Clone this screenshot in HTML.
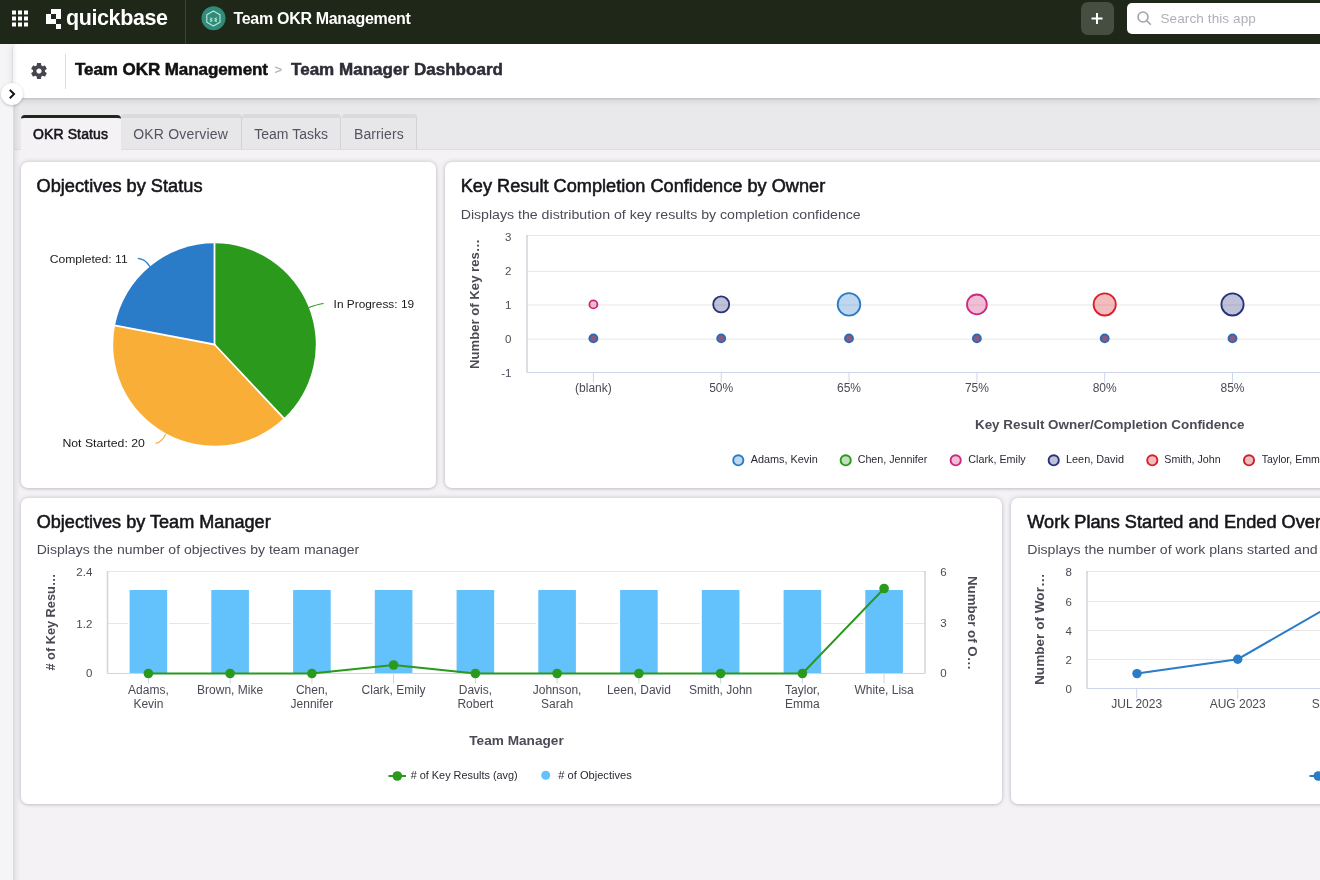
<!DOCTYPE html>
<html lang="en">
<head>
<meta charset="utf-8">
<title>Team Manager Dashboard</title>
<style>
*{box-sizing:border-box;margin:0;padding:0}
html,body{width:1320px;height:880px;overflow:hidden}
body{position:relative;background:#f4f2f5;font-family:"Liberation Sans",sans-serif;color:#1a1a1a}
.abs{position:absolute}
#topbar{left:0;top:0;width:1320px;height:44px;background:#1e2718}
#topbar .sep{left:185px;top:0;width:1px;height:44px;background:#3b4336}
#qb{left:66px;top:3.600px;font-size:21.5px;font-weight:700;color:#fff;letter-spacing:-0.4px;line-height:28px;white-space:nowrap}
#appname{left:233.500px;top:9.100px;font-size:16px;font-weight:700;color:#fff;line-height:20px;white-space:nowrap;letter-spacing:-0.31px}
#plus{left:1081px;top:2px;width:33px;height:33px;border-radius:7px;background:#454e40}
#search{left:1127px;top:3px;width:200px;height:31px;border-radius:5px;background:#fff}
#search span{position:absolute;left:33.400px;top:8px;font-size:13.5px;color:#b1b0b9;line-height:16px;white-space:nowrap;letter-spacing:0.12px}
#leftstrip{left:0;top:44px;width:13px;height:836px;background:#f5f4f7}
#leftedge{left:13px;top:98px;width:7px;height:782px;background:linear-gradient(to right,rgba(40,30,60,.13),rgba(40,30,60,.05) 40%,rgba(40,30,60,0))}
#pagebar{left:13px;top:44px;width:1307px;height:54px;background:#fff;box-shadow:0 1px 2px rgba(0,0,0,.10),0 2px 7px rgba(0,0,0,.13);background:linear-gradient(to right,#f1f0f3,#fff 4px)}
#vdiv{left:65.300px;top:54px;width:1px;height:35px;background:#dddce0}
#bc1{left:75px;top:58.600px;font-size:17px;font-weight:700;color:#111;line-height:22px;white-space:nowrap;letter-spacing:-0.07px;-webkit-text-stroke:0.5px #111}
#bcsep{left:274.500px;top:58.500px;font-size:13px;font-weight:700;color:#b9b8c0;line-height:22px}
#bc2{left:291px;top:58.600px;font-size:17px;font-weight:700;color:#2e2d36;line-height:22px;white-space:nowrap;letter-spacing:0.03px;-webkit-text-stroke:0.5px #2e2d36}
#toggle{left:1px;top:83px;width:22px;height:22px;border-radius:50%;background:#fff;box-shadow:0 1px 3px rgba(0,0,0,.22)}
#tabband{left:14px;top:98px;width:1306px;height:52px;background:#e9e9eb;border-bottom:1px solid #dedde1}
.tab{top:114px;height:35px;font-size:14px;line-height:18px;padding-top:7px;text-align:center;white-space:nowrap;color:#55535f;background:#e7e7e9;border-top:4px solid #dad9dd;border-right:1px solid #d2d1d6;border-radius:4px 4px 0 0}
.tab.on{top:115px;height:35px;background:#f4f2f5;border-top:3px solid #1e2718;color:#16151a;-webkit-text-stroke:0.55px #16151a;letter-spacing:0.13px;border-right:none}
.card{background:#fff;border-radius:7px;box-shadow:0 0 5px rgba(20,15,40,.20),0 1px 3px rgba(20,15,40,.10)}
svg text{font-family:"Liberation Sans",sans-serif}
</style>
</head>
<body>
<div id="root" class="abs" style="left:0;top:0;width:1320px;height:880px;overflow:hidden;will-change:transform">
<div id="topbar" class="abs">
  <svg class="abs" style="left:12px;top:10px" width="17" height="17" viewBox="0 0 17 17"><g fill="#fff"><rect x="0" y="0.5" width="4" height="4"/><rect x="6" y="0.5" width="4" height="4"/><rect x="12" y="0.5" width="4" height="4"/><rect x="0" y="6.5" width="4" height="4"/><rect x="6" y="6.5" width="4" height="4"/><rect x="12" y="6.5" width="4" height="4"/><rect x="0" y="12.5" width="4" height="4"/><rect x="6" y="12.5" width="4" height="4"/><rect x="12" y="12.5" width="4" height="4"/></g></svg>
  <svg class="abs" style="left:46px;top:9px" width="16" height="20" viewBox="0 0 16 20"><path fill="#fff" fill-rule="evenodd" d="M5 0h10v10H5z M0 5h10v10H0z M10 15h5v5h-5z"/></svg>
  <div id="qb" class="abs">quickbase</div>
  <div class="abs sep"></div>
  <svg class="abs" style="left:201px;top:6px" width="25" height="25" viewBox="0 0 25 25"><circle cx="12.500" cy="12.300" r="12" fill="#2e8c79"/><path d="M12.400 4.900l6.600 3.800v7.600l-6.600 3.800-6.600-3.800V8.700z" fill="none" stroke="#d3ece5" stroke-width="1.100" stroke-linejoin="round" opacity=".92"/><path d="M8.900 11.800l2.400 1-2.400 1 2.400 1-2.400 1M16 11.800l-2.400 1 2.400 1-2.400 1 2.400 1" fill="none" stroke="#d3ece5" stroke-width="0.900" opacity=".9"/></svg>
  <div id="appname" class="abs">Team OKR Management</div>
  <div id="plus" class="abs"><svg width="32" height="33" viewBox="0 0 32 33"><path d="M16 11v11M10.500 16.500h11" stroke="#fff" stroke-width="2"/></svg></div>
  <div id="search" class="abs"><svg class="abs" style="left:9px;top:7px" width="17" height="17" viewBox="0 0 17 17"><circle cx="7" cy="7" r="5" fill="none" stroke="#a3a2ab" stroke-width="1.600"/><path d="M10.800 10.800l4 4" stroke="#a3a2ab" stroke-width="1.600"/></svg><span>Search this app</span></div>
</div>
<div id="leftstrip" class="abs"></div>
<div id="tabband" class="abs"></div>
<div id="leftedge" class="abs"></div>
<div id="pagebar" class="abs"></div>
<svg class="abs" style="left:28.700px;top:60.800px" width="20" height="20" viewBox="0 0 24 24"><path fill="#47454f" d="M19.140 12.940c.04-.3.060-.61.060-.94 0-.32-.02-.64-.07-.94l2.030-1.580a.49.490 0 0 0 .12-.61l-1.920-3.320a.488.488 0 0 0-.59-.22l-2.390.96c-.5-.38-1.030-.7-1.620-.94l-.36-2.540a.484.484 0 0 0-.48-.41h-3.840c-.24 0-.43.170-.47.410l-.36 2.540c-.59.240-1.130.57-1.620.94l-2.390-.96c-.22-.08-.47 0-.59.220L2.740 8.870c-.12.210-.08.470.12.610l2.030 1.580c-.05.300-.09.630-.09.940s.02.640.07.940l-2.030 1.580a.49.490 0 0 0-.12.610l1.920 3.320c.12.220.37.290.59.220l2.390-.96c.5.380 1.030.7 1.620.94l.36 2.540c.05.240.24.410.48.410h3.840c.24 0 .44-.17.470-.41l.36-2.540c.59-.24 1.130-.56 1.620-.94l2.390.96c.22.080.47 0 .59-.22l1.920-3.320c.12-.22.070-.47-.12-.61l-2.010-1.580zM12 15.100c-1.700 0-3.100-1.400-3.100-3.100s1.400-3.100 3.100-3.100 3.100 1.400 3.100 3.100-1.400 3.100-3.100 3.100z"/></svg>
<div id="vdiv" class="abs"></div>
<div id="bc1" class="abs">Team OKR Management</div>
<div id="bcsep" class="abs">&gt;</div>
<div id="bc2" class="abs">Team Manager Dashboard</div>
<div id="toggle" class="abs"><svg width="22" height="22" viewBox="0 0 22 22"><path d="M8.800 6.900l4.200 4.200-4.200 4.200" fill="none" stroke="#111" stroke-width="2"/></svg></div>

<div class="abs tab on" style="left:20.500px;width:100px"><span>OKR Status</span></div>
<div class="abs tab" style="left:120.500px;width:121.300px;letter-spacing:0.2px"><span>OKR Overview</span></div>
<div class="abs tab" style="left:241.800px;width:99.700px"><span>Team Tasks</span></div>
<div class="abs tab" style="left:341.500px;width:75.800px;letter-spacing:0.1px"><span>Barriers</span></div>

<div class="abs card" id="c1" style="left:21px;top:162px;width:415px;height:326px"></div>
<div class="abs card" id="c2" style="left:445px;top:162px;width:900px;height:326px"></div>
<div class="abs card" id="c3" style="left:21px;top:498px;width:981px;height:306px"></div>
<div class="abs card" id="c4" style="left:1011px;top:498px;width:340px;height:306px"></div>

<svg id="charts" class="abs" style="left:0;top:0" width="1320" height="880" viewBox="0 0 1320 880">
<text x="36.5" y="192" font-size="18" fill="#16151a" text-anchor="start" font-weight="normal" textLength="166" lengthAdjust="spacingAndGlyphs" stroke="#16151a" stroke-width="0.55">Objectives by Status</text>
<path d="M214.5 344.5L214.50 243.20A101.3 101.3 0 0 1 283.84 418.34Z" fill="#2a991c"/>
<path d="M214.5 344.5L283.84 418.34A101.3 101.3 0 0 1 114.99 325.52Z" fill="#f9ae38"/>
<path d="M214.5 344.5L114.99 325.52A101.3 101.3 0 0 1 214.50 243.20Z" fill="#2a7cc8"/>
<path d="M214.5 344.5L214.50 242.70" stroke="#fff" stroke-width="1.8" stroke-linecap="round"/>
<path d="M214.5 344.5L284.19 418.71" stroke="#fff" stroke-width="1.8" stroke-linecap="round"/>
<path d="M214.5 344.5L114.50 325.42" stroke="#fff" stroke-width="1.8" stroke-linecap="round"/>
<path d="M137.8 258.4C143.5 258.6 146.5 262 150 266.6" fill="none" stroke="#2a7cc8" stroke-width="1.2"/>
<path d="M308.8 307.5C314 305.6 318 304.2 323.6 303.5" fill="none" stroke="#2a991c" stroke-width="1.2"/>
<path d="M165.7 434.2C163 439.6 160.5 442.8 155.5 443.4" fill="none" stroke="#f9ae38" stroke-width="1.2"/>
<text x="49.7" y="262.5" font-size="11.5" fill="#1a1a1a" text-anchor="start" font-weight="normal" textLength="78" lengthAdjust="spacingAndGlyphs">Completed: 11</text>
<text x="333.6" y="307.9" font-size="11.5" fill="#1a1a1a" text-anchor="start" font-weight="normal" textLength="80.5" lengthAdjust="spacingAndGlyphs">In Progress: 19</text>
<text x="62.4" y="446.9" font-size="11.5" fill="#1a1a1a" text-anchor="start" font-weight="normal" textLength="82.5" lengthAdjust="spacingAndGlyphs">Not Started: 20</text>
<text x="460.7" y="192" font-size="18" fill="#16151a" text-anchor="start" font-weight="normal" textLength="364.5" lengthAdjust="spacingAndGlyphs" stroke="#16151a" stroke-width="0.55">Key Result Completion Confidence by Owner</text>
<text x="460.7" y="218.5" font-size="13" fill="#4b4a55" text-anchor="start" font-weight="normal" textLength="400" lengthAdjust="spacingAndGlyphs">Displays the distribution of key results by completion confidence</text>
<path d="M527 235.5H1320" stroke="#e6e6e6" stroke-width="1"/>
<path d="M527 271.4H1320" stroke="#e6e6e6" stroke-width="1"/>
<path d="M527 305.0H1320" stroke="#e6e6e6" stroke-width="1"/>
<path d="M527 339.2H1320" stroke="#e6e6e6" stroke-width="1"/>
<path d="M527 235.0V372.5" stroke="#d6d5dd" stroke-width="1.6"/>
<path d="M527 372.5H1320" stroke="#ccd6eb" stroke-width="1"/>
<text x="511.5" y="240.5" font-size="11.5" fill="#4b4a55" text-anchor="end" font-weight="normal">3</text>
<text x="511.5" y="275" font-size="11.5" fill="#4b4a55" text-anchor="end" font-weight="normal">2</text>
<text x="511.5" y="309" font-size="11.5" fill="#4b4a55" text-anchor="end" font-weight="normal">1</text>
<text x="511.5" y="342.5" font-size="11.5" fill="#4b4a55" text-anchor="end" font-weight="normal">0</text>
<text x="511.5" y="377.4" font-size="11.5" fill="#4b4a55" text-anchor="end" font-weight="normal">-1</text>
<text transform="translate(479,304) rotate(-90)" font-size="13" font-weight="700" fill="#4b4a55" text-anchor="middle" textLength="130" lengthAdjust="spacingAndGlyphs">Number of Key res…</text>
<path d="M593.4 372.5v10" stroke="#ccd6eb" stroke-width="1"/>
<text x="593.4" y="392" font-size="12" fill="#4b4a55" text-anchor="middle" font-weight="normal">(blank)</text>
<circle cx="593.4" cy="338.4" r="4.9" fill="#2b6bb3"/><circle cx="593.4" cy="338.4" r="2.9" fill="#8a5a80"/>
<path d="M721.2 372.5v10" stroke="#ccd6eb" stroke-width="1"/>
<text x="721.2" y="392" font-size="12" fill="#4b4a55" text-anchor="middle" font-weight="normal">50%</text>
<circle cx="721.2" cy="338.4" r="4.9" fill="#2b6bb3"/><circle cx="721.2" cy="338.4" r="2.9" fill="#8a5a80"/>
<path d="M849.0 372.5v10" stroke="#ccd6eb" stroke-width="1"/>
<text x="849.0" y="392" font-size="12" fill="#4b4a55" text-anchor="middle" font-weight="normal">65%</text>
<circle cx="849.0" cy="338.4" r="4.9" fill="#2b6bb3"/><circle cx="849.0" cy="338.4" r="2.9" fill="#8a5a80"/>
<path d="M976.9 372.5v10" stroke="#ccd6eb" stroke-width="1"/>
<text x="976.9" y="392" font-size="12" fill="#4b4a55" text-anchor="middle" font-weight="normal">75%</text>
<circle cx="976.9" cy="338.4" r="4.9" fill="#2b6bb3"/><circle cx="976.9" cy="338.4" r="2.9" fill="#8a5a80"/>
<path d="M1104.7 372.5v10" stroke="#ccd6eb" stroke-width="1"/>
<text x="1104.7" y="392" font-size="12" fill="#4b4a55" text-anchor="middle" font-weight="normal">80%</text>
<circle cx="1104.7" cy="338.4" r="4.9" fill="#2b6bb3"/><circle cx="1104.7" cy="338.4" r="2.9" fill="#8a5a80"/>
<path d="M1232.5 372.5v10" stroke="#ccd6eb" stroke-width="1"/>
<text x="1232.5" y="392" font-size="12" fill="#4b4a55" text-anchor="middle" font-weight="normal">85%</text>
<circle cx="1232.5" cy="338.4" r="4.9" fill="#2b6bb3"/><circle cx="1232.5" cy="338.4" r="2.9" fill="#8a5a80"/>
<circle cx="593.4" cy="304.4" r="4.00" fill="#cc2a72" fill-opacity="0.3" stroke="#cc2a72" stroke-width="1.8"/>
<circle cx="721.2" cy="304.4" r="8.00" fill="#27327a" fill-opacity="0.3" stroke="#27327a" stroke-width="1.8"/>
<circle cx="849.0" cy="304.4" r="11.30" fill="#2a7cc8" fill-opacity="0.3" stroke="#2a7cc8" stroke-width="1.8"/>
<circle cx="976.9" cy="304.4" r="9.90" fill="#cc2a7a" fill-opacity="0.3" stroke="#cc2a7a" stroke-width="1.8"/>
<circle cx="1104.7" cy="304.4" r="11.10" fill="#d6232b" fill-opacity="0.3" stroke="#d6232b" stroke-width="1.8"/>
<circle cx="1232.5" cy="304.4" r="11.10" fill="#27327a" fill-opacity="0.3" stroke="#27327a" stroke-width="1.8"/>
<text x="1109.7" y="429" font-size="13" fill="#4b4a55" text-anchor="middle" font-weight="700" textLength="269.5" lengthAdjust="spacingAndGlyphs">Key Result Owner/Completion Confidence</text>
<circle cx="738.3" cy="460.3" r="5.1" fill="#2a7cc8" fill-opacity="0.3" stroke="#2a7cc8" stroke-width="1.9"/>
<text x="750.7" y="463.3" font-size="10.5" fill="#2a2933" text-anchor="start" font-weight="normal" textLength="67" lengthAdjust="spacingAndGlyphs">Adams, Kevin</text>
<circle cx="845.7" cy="460.3" r="5.1" fill="#2a991c" fill-opacity="0.3" stroke="#2a991c" stroke-width="1.9"/>
<text x="857.7" y="463.3" font-size="10.5" fill="#2a2933" text-anchor="start" font-weight="normal" textLength="69.6" lengthAdjust="spacingAndGlyphs">Chen, Jennifer</text>
<circle cx="955.7" cy="460.3" r="5.1" fill="#cc2a7a" fill-opacity="0.3" stroke="#cc2a7a" stroke-width="1.9"/>
<text x="968.3" y="463.3" font-size="10.5" fill="#2a2933" text-anchor="start" font-weight="normal" textLength="57.4" lengthAdjust="spacingAndGlyphs">Clark, Emily</text>
<circle cx="1053.7" cy="460.3" r="5.1" fill="#27327a" fill-opacity="0.3" stroke="#27327a" stroke-width="1.9"/>
<text x="1066" y="463.3" font-size="10.5" fill="#2a2933" text-anchor="start" font-weight="normal" textLength="58" lengthAdjust="spacingAndGlyphs">Leen, David</text>
<circle cx="1152.3" cy="460.3" r="5.1" fill="#d6232b" fill-opacity="0.3" stroke="#d6232b" stroke-width="1.9"/>
<text x="1164.3" y="463.3" font-size="10.5" fill="#2a2933" text-anchor="start" font-weight="normal" textLength="56.4" lengthAdjust="spacingAndGlyphs">Smith, John</text>
<circle cx="1249" cy="460.3" r="5.1" fill="#c8232b" fill-opacity="0.3" stroke="#c8232b" stroke-width="1.9"/>
<text x="1261.7" y="463.3" font-size="10.5" fill="#2a2933" text-anchor="start" font-weight="normal" textLength="64" lengthAdjust="spacingAndGlyphs">Taylor, Emma</text>
<text x="36.7" y="527.7" font-size="18" fill="#16151a" text-anchor="start" font-weight="normal" textLength="234" lengthAdjust="spacingAndGlyphs" stroke="#16151a" stroke-width="0.55">Objectives by Team Manager</text>
<text x="36.7" y="554.3" font-size="13" fill="#4b4a55" text-anchor="start" font-weight="normal" textLength="322.6" lengthAdjust="spacingAndGlyphs">Displays the number of objectives by team manager</text>
<path d="M107.5 571.5H925M107.5 623.5H925" stroke="#e6e6e6" stroke-width="1"/>
<path d="M107.5 571.0V673.5M925 571.0V673.5" stroke="#d6d5dd" stroke-width="1.6"/>
<path d="M107.5 673.5H925" stroke="#ccd6eb" stroke-width="1"/>
<rect x="127.6" y="588" width="41.6" height="84.5" fill="#fff"/><rect x="129.6" y="590" width="37.6" height="83.5" fill="#63c1fb"/>
<rect x="209.3" y="588" width="41.6" height="84.5" fill="#fff"/><rect x="211.3" y="590" width="37.6" height="83.5" fill="#63c1fb"/>
<rect x="291.1" y="588" width="41.6" height="84.5" fill="#fff"/><rect x="293.1" y="590" width="37.6" height="83.5" fill="#63c1fb"/>
<rect x="372.8" y="588" width="41.6" height="84.5" fill="#fff"/><rect x="374.8" y="590" width="37.6" height="83.5" fill="#63c1fb"/>
<rect x="454.6" y="588" width="41.6" height="84.5" fill="#fff"/><rect x="456.6" y="590" width="37.6" height="83.5" fill="#63c1fb"/>
<rect x="536.3" y="588" width="41.6" height="84.5" fill="#fff"/><rect x="538.3" y="590" width="37.6" height="83.5" fill="#63c1fb"/>
<rect x="618.1" y="588" width="41.6" height="84.5" fill="#fff"/><rect x="620.1" y="590" width="37.6" height="83.5" fill="#63c1fb"/>
<rect x="699.8" y="588" width="41.6" height="84.5" fill="#fff"/><rect x="701.8" y="590" width="37.6" height="83.5" fill="#63c1fb"/>
<rect x="781.6" y="588" width="41.6" height="84.5" fill="#fff"/><rect x="783.6" y="590" width="37.6" height="83.5" fill="#63c1fb"/>
<rect x="863.3" y="588" width="41.6" height="84.5" fill="#fff"/><rect x="865.3" y="590" width="37.6" height="83.5" fill="#63c1fb"/>
<path d="M107.5 673.5H925" stroke="#ccd6eb" stroke-width="1"/>
<path d="M148.4 673.5v10" stroke="#ccd6eb" stroke-width="1"/>
<text x="148.4" y="693.5" font-size="12" fill="#4b4a55" text-anchor="middle" font-weight="normal">Adams,</text>
<text x="148.4" y="707.5" font-size="12" fill="#4b4a55" text-anchor="middle" font-weight="normal">Kevin</text>
<path d="M230.1 673.5v10" stroke="#ccd6eb" stroke-width="1"/>
<text x="230.1" y="693.5" font-size="12" fill="#4b4a55" text-anchor="middle" font-weight="normal">Brown, Mike</text>
<path d="M311.9 673.5v10" stroke="#ccd6eb" stroke-width="1"/>
<text x="311.9" y="693.5" font-size="12" fill="#4b4a55" text-anchor="middle" font-weight="normal">Chen,</text>
<text x="311.9" y="707.5" font-size="12" fill="#4b4a55" text-anchor="middle" font-weight="normal">Jennifer</text>
<path d="M393.6 673.5v10" stroke="#ccd6eb" stroke-width="1"/>
<text x="393.6" y="693.5" font-size="12" fill="#4b4a55" text-anchor="middle" font-weight="normal">Clark, Emily</text>
<path d="M475.4 673.5v10" stroke="#ccd6eb" stroke-width="1"/>
<text x="475.4" y="693.5" font-size="12" fill="#4b4a55" text-anchor="middle" font-weight="normal">Davis,</text>
<text x="475.4" y="707.5" font-size="12" fill="#4b4a55" text-anchor="middle" font-weight="normal">Robert</text>
<path d="M557.1 673.5v10" stroke="#ccd6eb" stroke-width="1"/>
<text x="557.1" y="693.5" font-size="12" fill="#4b4a55" text-anchor="middle" font-weight="normal">Johnson,</text>
<text x="557.1" y="707.5" font-size="12" fill="#4b4a55" text-anchor="middle" font-weight="normal">Sarah</text>
<path d="M638.9 673.5v10" stroke="#ccd6eb" stroke-width="1"/>
<text x="638.9" y="693.5" font-size="12" fill="#4b4a55" text-anchor="middle" font-weight="normal">Leen, David</text>
<path d="M720.6 673.5v10" stroke="#ccd6eb" stroke-width="1"/>
<text x="720.6" y="693.5" font-size="12" fill="#4b4a55" text-anchor="middle" font-weight="normal">Smith, John</text>
<path d="M802.4 673.5v10" stroke="#ccd6eb" stroke-width="1"/>
<text x="802.4" y="693.5" font-size="12" fill="#4b4a55" text-anchor="middle" font-weight="normal">Taylor,</text>
<text x="802.4" y="707.5" font-size="12" fill="#4b4a55" text-anchor="middle" font-weight="normal">Emma</text>
<path d="M884.1 673.5v10" stroke="#ccd6eb" stroke-width="1"/>
<text x="884.1" y="693.5" font-size="12" fill="#4b4a55" text-anchor="middle" font-weight="normal">White, Lisa</text>
<path d="M148.4 673.5L230.1 673.5L311.9 673.5L393.6 665.0L475.4 673.5L557.1 673.5L638.9 673.5L720.6 673.5L802.4 673.5L884.1 588.5" fill="none" stroke="#2a991c" stroke-width="2" stroke-linejoin="round"/>
<circle cx="148.4" cy="673.5" r="4.8" fill="#2a991c"/>
<circle cx="230.1" cy="673.5" r="4.8" fill="#2a991c"/>
<circle cx="311.9" cy="673.5" r="4.8" fill="#2a991c"/>
<circle cx="393.6" cy="665.0" r="4.8" fill="#2a991c"/>
<circle cx="475.4" cy="673.5" r="4.8" fill="#2a991c"/>
<circle cx="557.1" cy="673.5" r="4.8" fill="#2a991c"/>
<circle cx="638.9" cy="673.5" r="4.8" fill="#2a991c"/>
<circle cx="720.6" cy="673.5" r="4.8" fill="#2a991c"/>
<circle cx="802.4" cy="673.5" r="4.8" fill="#2a991c"/>
<circle cx="884.1" cy="588.5" r="4.8" fill="#2a991c"/>
<text x="92.3" y="576.2" font-size="11.5" fill="#4b4a55" text-anchor="end" font-weight="normal">2.4</text>
<text x="92.3" y="627.7" font-size="11.5" fill="#4b4a55" text-anchor="end" font-weight="normal">1.2</text>
<text x="92.3" y="676.9000000000001" font-size="11.5" fill="#4b4a55" text-anchor="end" font-weight="normal">0</text>
<text x="940.2" y="575.7" font-size="11.5" fill="#4b4a55" text-anchor="start" font-weight="normal">6</text>
<text x="940.2" y="627.4000000000001" font-size="11.5" fill="#4b4a55" text-anchor="start" font-weight="normal">3</text>
<text x="940.2" y="677.2" font-size="11.5" fill="#4b4a55" text-anchor="start" font-weight="normal">0</text>
<text transform="translate(54.5,622) rotate(-90)" font-size="13" font-weight="700" fill="#4b4a55" text-anchor="middle" textLength="97" lengthAdjust="spacingAndGlyphs"># of Key Resu…</text>
<text transform="translate(967.5,623) rotate(90)" font-size="13" font-weight="700" fill="#4b4a55" text-anchor="middle" textLength="94" lengthAdjust="spacingAndGlyphs">Number of O…</text>
<text x="516.5" y="745.3" font-size="13" fill="#4b4a55" text-anchor="middle" font-weight="700" textLength="94.5" lengthAdjust="spacingAndGlyphs">Team Manager</text>
<path d="M388.500 776H406" stroke="#2a991c" stroke-width="2"/><circle cx="397.300" cy="776" r="4.800" fill="#2a991c"/>
<text x="410.7" y="778.8" font-size="10.5" fill="#2a2933" text-anchor="start" font-weight="normal" textLength="107" lengthAdjust="spacingAndGlyphs"># of Key Results (avg)</text>
<circle cx="545.700" cy="775.300" r="4.500" fill="#63c1fb"/>
<text x="558.3" y="778.8" font-size="10.5" fill="#2a2933" text-anchor="start" font-weight="normal" textLength="73.4" lengthAdjust="spacingAndGlyphs"># of Objectives</text>
<text x="1027.2" y="527.7" font-size="18" fill="#16151a" text-anchor="start" font-weight="normal" textLength="338.2" lengthAdjust="spacingAndGlyphs" stroke="#16151a" stroke-width="0.55">Work Plans Started and Ended Over Time</text>
<text x="1027.2" y="554.3" font-size="13" fill="#4b4a55" text-anchor="start" font-weight="normal" textLength="395.6" lengthAdjust="spacingAndGlyphs">Displays the number of work plans started and ended over time</text>
<path d="M1087 571.5H1320" stroke="#e6e6e6" stroke-width="1"/>
<path d="M1087 601.5H1320" stroke="#e6e6e6" stroke-width="1"/>
<path d="M1087 630.5H1320" stroke="#e6e6e6" stroke-width="1"/>
<path d="M1087 659.5H1320" stroke="#e6e6e6" stroke-width="1"/>
<path d="M1087 571.0V688.5" stroke="#d6d5dd" stroke-width="1.6"/>
<path d="M1087 688.5H1320" stroke="#ccd6eb" stroke-width="1"/>
<text x="1071.8" y="575.7" font-size="11.5" fill="#4b4a55" text-anchor="end" font-weight="normal">8</text>
<text x="1071.8" y="605.7" font-size="11.5" fill="#4b4a55" text-anchor="end" font-weight="normal">6</text>
<text x="1071.8" y="634.7" font-size="11.5" fill="#4b4a55" text-anchor="end" font-weight="normal">4</text>
<text x="1071.8" y="663.7" font-size="11.5" fill="#4b4a55" text-anchor="end" font-weight="normal">2</text>
<text x="1071.8" y="692.7" font-size="11.5" fill="#4b4a55" text-anchor="end" font-weight="normal">0</text>
<text transform="translate(1043.5,629.2) rotate(-90)" font-size="13" font-weight="700" fill="#4b4a55" text-anchor="middle" textLength="111.5" lengthAdjust="spacingAndGlyphs">Number of Wor…</text>
<path d="M1137.0 673.6L1237.7 659.2L1338.4 601.3" fill="none" stroke="#2a7cc8" stroke-width="2"/>
<circle cx="1137.0" cy="673.6" r="4.7" fill="#2a7cc8"/>
<circle cx="1237.7" cy="659.2" r="4.7" fill="#2a7cc8"/>
<circle cx="1338.4" cy="601.3" r="4.7" fill="#2a7cc8"/>
<path d="M1136.7 688.5v10" stroke="#ccd6eb" stroke-width="1"/>
<text x="1136.7" y="707.5" font-size="12" fill="#4b4a55" text-anchor="middle" font-weight="normal">JUL 2023</text>
<path d="M1237.7 688.5v10" stroke="#ccd6eb" stroke-width="1"/>
<text x="1237.7" y="707.5" font-size="12" fill="#4b4a55" text-anchor="middle" font-weight="normal">AUG 2023</text>
<path d="M1338.7 688.5v10" stroke="#ccd6eb" stroke-width="1"/>
<text x="1338.7" y="707.5" font-size="12" fill="#4b4a55" text-anchor="middle" font-weight="normal">SEP 2023</text>
<path d="M1309.500 776H1327" stroke="#2a7cc8" stroke-width="2"/><circle cx="1318.300" cy="776" r="4.800" fill="#2a7cc8"/>
</svg>
</div>
</body>
</html>
